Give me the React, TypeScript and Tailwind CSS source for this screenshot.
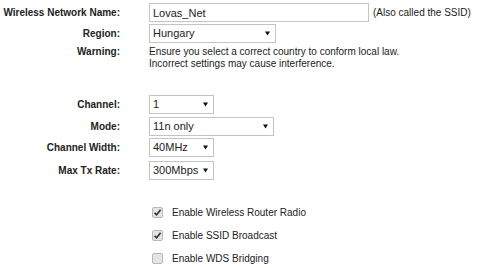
import React from "react";

const labelCls = "w-[120px] shrink-0 text-right text-[10px] font-bold leading-[12px] text-[#222]";

function Row({ label, top, children }: { label: string; top: string; children: React.ReactNode }) {
  return (
    <div className={`flex h-[19px] items-center gap-[29px] ${top}`}>
      <div className={labelCls}>{label}</div>
      {children}
    </div>
  );
}

function Select({ value, width }: { value: string; width: string }) {
  return (
    <div className={`relative h-[19px] ${width}`}>
      <select
        defaultValue={value}
        className="block h-[19px] w-full appearance-none border border-[#c4c4c4] bg-white pl-[3px] text-[11px] leading-none text-[#222] outline-none"
      >
        <option>{value}</option>
      </select>
      <svg className="pointer-events-none absolute right-[6px] top-[7px]" width="5" height="5" viewBox="0 0 5 5">
        <path d="M0 0.5H5L2.5 4.5Z" fill="#111" />
      </svg>
    </div>
  );
}

function Check({ label, checked, top }: { label: string; checked: boolean; top: string }) {
  return (
    <label className={`flex h-[15px] items-center ${top}`}>
      <span className="ml-[152px] flex h-[11px] w-[11px] items-center justify-center rounded-[2px] border border-[#b8b8b8] bg-[#e4e4e4]">
        {checked && (
          <svg width="9" height="9" viewBox="0 0 9 9">
            <path d="M1.5 4.8L3.6 6.8L7.6 1.8" stroke="#333" strokeWidth="1.6" fill="none" />
          </svg>
        )}
      </span>
      <span className="ml-[9px] text-[10px] leading-[12px] text-[#222]">{label}</span>
    </label>
  );
}

export default function App() {
  return (
    <div className="h-[268px] w-[480px] overflow-hidden bg-white pt-[3px] font-['Liberation_Sans',Arial,sans-serif]">
      <Row label="Wireless Network Name:" top="">
        <div className="flex items-center gap-[4px]">
          <input
            defaultValue="Lovas_Net"
            className="block h-[19px] w-[220px] border border-[#c4c4c4] bg-white px-[3px] text-[11px] text-[#222] outline-none"
          />
          <span className="text-[10px] leading-[12px] text-[#222]">(Also called the SSID)</span>
        </div>
      </Row>
      <Row label="Region:" top="mt-[2px]">
        <Select value="Hungary" width="w-[127px]" />
      </Row>
      <div className="mt-[3px] flex gap-[29px] leading-[12px]">
        <div className={labelCls}>Warning:</div>
        <div className="text-[10px] text-[#222]">
          <div>Ensure you select a correct country to conform local law.</div>
          <div>Incorrect settings may cause interference.</div>
        </div>
      </div>
      <Row label="Channel:" top="mt-[25px]">
        <Select value="1" width="w-[65px]" />
      </Row>
      <Row label="Mode:" top="mt-[3px]">
        <Select value="11n only" width="w-[125px]" />
      </Row>
      <Row label="Channel Width:" top="mt-[2px]">
        <Select value="40MHz" width="w-[65px]" />
      </Row>
      <Row label="Max Tx Rate:" top="mt-[4px]">
        <Select value="300Mbps" width="w-[65px]" />
      </Row>
      <Check label="Enable Wireless Router Radio" checked top="mt-[25px]" />
      <Check label="Enable SSID Broadcast" checked top="mt-[8px]" />
      <Check label="Enable WDS Bridging" checked={false} top="mt-[8px]" />
    </div>
  );
}
